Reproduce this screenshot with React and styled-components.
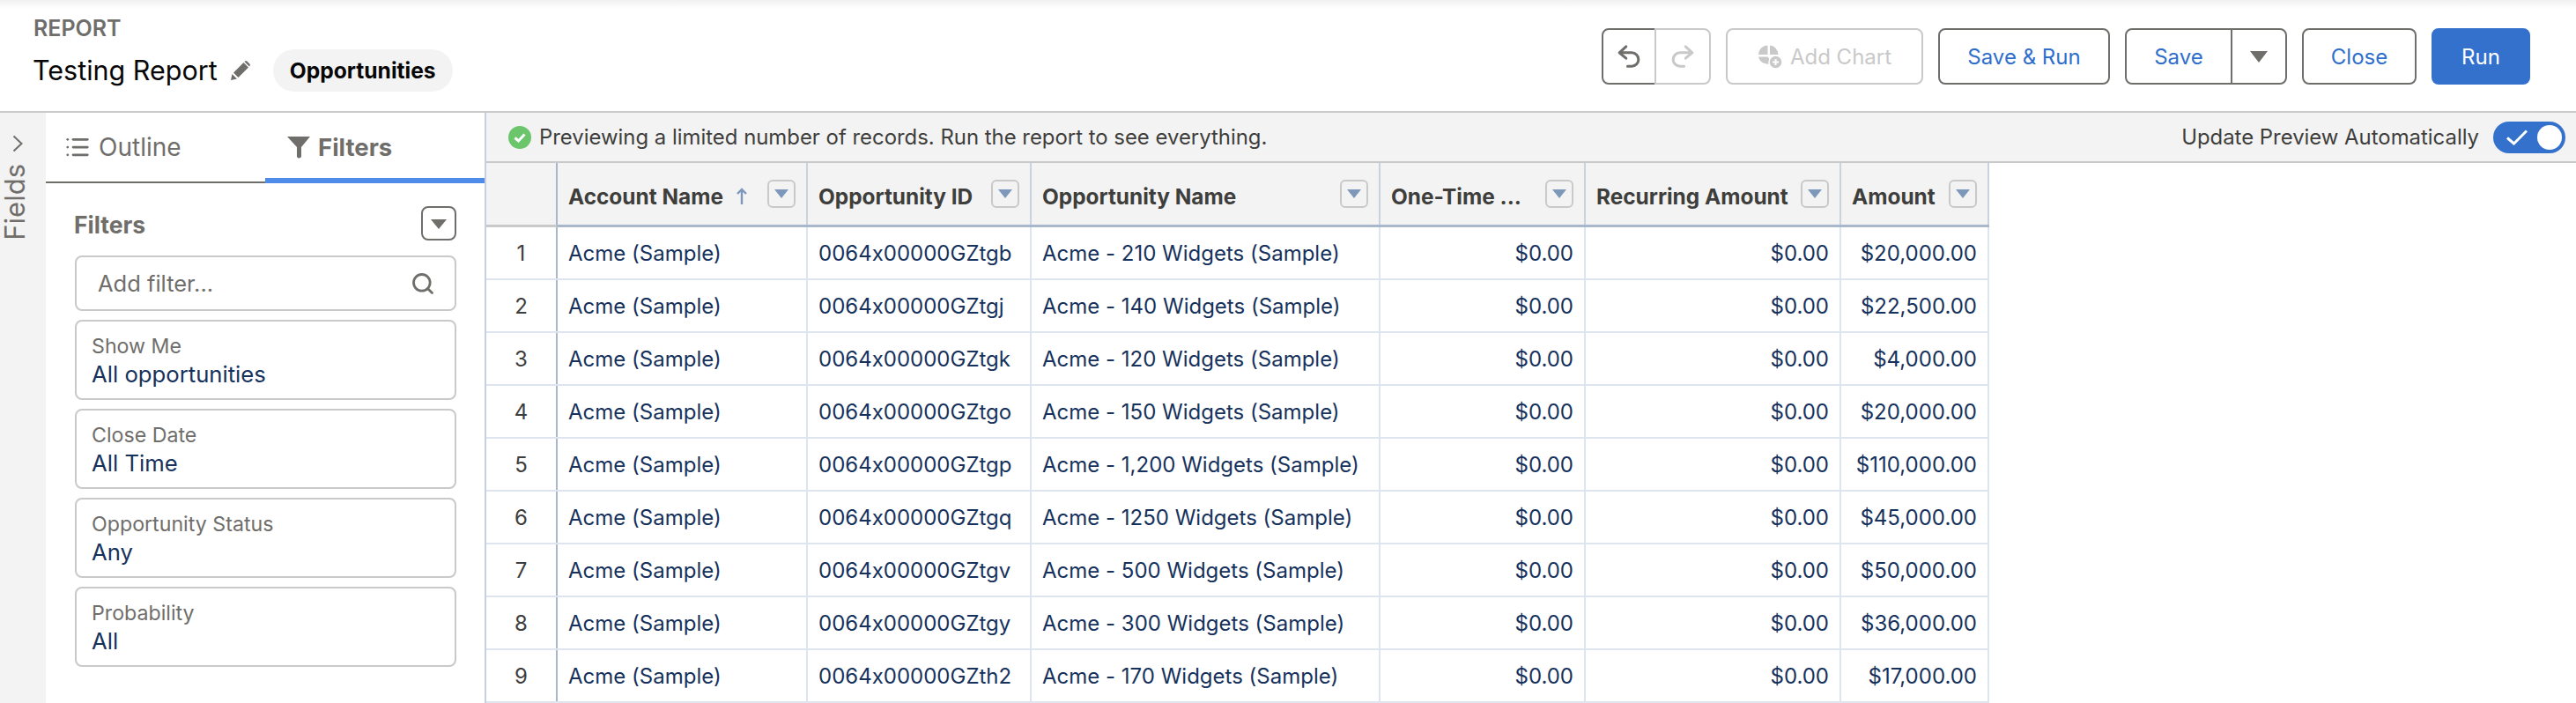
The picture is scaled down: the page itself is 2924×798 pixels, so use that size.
import React from 'react';
import styled, { createGlobalStyle } from 'styled-components';
import { List, Search } from 'lucide-react';

const GlobalStyle = createGlobalStyle`
  * { box-sizing: border-box; }
  html, body { margin: 0; padding: 0; background: #fff; }
  body {
    font-family: Inter, "Liberation Sans", sans-serif;
    font-feature-settings: "calt" 0;
    overflow: hidden;
  }
`;

const Page = styled.div`
  width: 2924px;
  height: 798px;
  display: flex;
  flex-direction: column;
  overflow: hidden;
`;

const Header = styled.header`
  height: 128px;
  flex: none;
  display: flex;
  align-items: flex-start;
  justify-content: space-between;
  padding: 20px 52px 0 37px;
  background: linear-gradient(#f1f1f1, #fff 10px);
  border-bottom: 2px solid #c9c9c9;
`;

const TitleBlock = styled.div`
  display: flex;
  flex-direction: column;
  gap: 12px;
`;

const Eyebrow = styled.div`
  font-size: 25px;
  line-height: 24px;
  font-weight: 600;
  color: #706e6b;
  padding-left: 1px;
`;

const TitleRow = styled.div`
  display: flex;
  align-items: center;
`;

const Title = styled.h1`
  margin: 0;
  font-size: 30.5px;
  line-height: 48px;
  font-weight: 400;
  color: #080707;
`;

const PencilIcon = styled.svg`
  width: 24px;
  height: 24px;
  margin: 0 25px 0 14px;
  fill: #706e6b;
`;

const Pill = styled.span`
  height: 48px;
  display: flex;
  align-items: center;
  padding: 0 19px;
  border-radius: 24px;
  background: #f3f3f3;
  font-size: 24.6px;
  font-weight: 700;
  color: #080707;
`;

const Actions = styled.div`
  display: flex;
  gap: 17px;
  margin-top: 12px;
`;

const Button = styled.button`
  width: ${p => p.$width}px;
  height: 64px;
  padding: 0;
  display: flex;
  align-items: center;
  justify-content: center;
  gap: 9px;
  font: inherit;
  font-size: 24px;
  border-radius: 8px;
  border: 2px solid ${p => (p.$disabled ? '#c9c9c9' : p.$primary ? '#3371cc' : '#706e6b')};
  background: ${p => (p.$primary ? '#3371cc' : '#fff')};
  color: ${p => (p.$disabled ? '#c9c9c9' : p.$primary ? '#fff' : '#2f6ecb')};
`;

const SplitLeft = styled(Button)`
  border-radius: 8px 0 0 8px;
`;

const SplitRight = styled(Button)`
  margin-left: -2px;
  border-radius: 0 8px 8px 0;
`;

const Group = styled.div`
  display: flex;
`;

const ActionIcon = styled.svg`
  width: 28px;
  height: 28px;
  fill: none;
  stroke: ${p => p.$color};
  stroke-width: 2.6;
  stroke-linecap: round;
  stroke-linejoin: round;
  transform: ${p => (p.$flip ? 'scaleX(-1)' : 'none')};
`;

const Caret = styled.span`
  width: 0;
  height: 0;
  border-left: ${p => p.$size}px solid transparent;
  border-right: ${p => p.$size}px solid transparent;
  border-top: ${p => p.$size * 1.3}px solid ${p => p.$color};
  margin-top: ${p => p.$offset || 0}px;
`;

const Body = styled.div`
  flex: 1;
  min-height: 0;
  display: flex;
`;

const Rail = styled.aside`
  width: 52px;
  flex: none;
  background: #f3f3f3;
  display: flex;
  flex-direction: column;
  align-items: flex-start;
  padding-top: 25px;
  gap: 13px;
  color: #706e6b;
`;

const RailChevron = styled.svg`
  width: 12px;
  height: 20px;
  margin-left: 14px;
  fill: none;
  stroke: #706e6b;
  stroke-width: 2;
`;

const RailLabel = styled.span`
  writing-mode: vertical-rl;
  transform: rotate(180deg);
  font-size: 31px;
  line-height: 33px;
  color: #706e6b;
`;

const Panel = styled.section`
  width: 500px;
  flex: none;
  border-right: 2px solid #c4d0e0;
`;

const Tabs = styled.div`
  height: 80px;
  display: grid;
  grid-template-columns: 249px 249px;
`;

const Tab = styled.div`
  display: flex;
  align-items: center;
  gap: 9px;
  padding: ${p => (p.$active ? '3px 0 0 25px' : '0 0 0 21px')};
  font-size: ${p => (p.$active ? 27.5 : 28)}px;
  font-weight: ${p => (p.$active ? 700 : 400)};
  color: #706e6b;
  border-bottom: ${p => (p.$active ? '6px solid #4f8cea' : '2px solid #706e6b')};
`;

const FunnelIcon = styled.svg`
  width: 26px;
  height: 26px;
  fill: #706e6b;
`;

const FilterArea = styled.div`
  padding: 26px 32px 0 33px;
  display: flex;
  flex-direction: column;
  gap: 10px;
`;

const FilterHead = styled.div`
  display: flex;
  align-items: center;
  justify-content: space-between;
  margin-bottom: 7px;
`;

const FilterTitle = styled.h2`
  margin: 3px 0 0 -1px;
  font-size: 26.5px;
  font-weight: 700;
  color: #706e6b;
`;

const MenuButton = styled.button`
  width: 40px;
  height: 39px;
  padding: 0;
  display: flex;
  align-items: center;
  justify-content: center;
  background: #fff;
  border: 2px solid #706e6b;
  border-radius: 8px;
`;

const AddFilter = styled.div`
  height: 63px;
  display: flex;
  align-items: center;
  justify-content: space-between;
  padding: 0 22px 0 24px;
  border: 2px solid #c9c9c9;
  border-radius: 8px;
  font-size: 25.5px;
  color: #706e6b;
`;

const FilterCard = styled.div`
  height: 91px;
  padding: 12px 17px 0;
  border: 2px solid #c9c9c9;
  border-radius: 8px;
`;

const CardLabel = styled.div`
  font-size: 23.2px;
  line-height: 32px;
  color: #706e6b;
`;

const CardValue = styled.div`
  font-size: 25.7px;
  line-height: 32px;
  color: #16325c;
`;

const Main = styled.main`
  flex: 1;
  min-width: 0;
`;

const Notice = styled.div`
  height: 57px;
  display: flex;
  align-items: center;
  justify-content: space-between;
  padding: 0 12px 0 25px;
  background: #f3f3f3;
  border-bottom: 2px solid #c9c9c9;
  font-size: 23.9px;
  color: #3e3e3c;
`;

const NoticeText = styled.div`
  display: flex;
  align-items: center;
  gap: 9px;
`;

const NoticeToggle = styled.div`
  display: flex;
  align-items: center;
  gap: 16px;
`;

const Switch = styled.div`
  width: 82px;
  height: 36px;
  display: flex;
  align-items: center;
  justify-content: space-between;
  padding: 0 4px 0 15px;
  border-radius: 18px;
  background: #3371cc;
`;

const Knob = styled.span`
  width: 28px;
  height: 28px;
  border-radius: 50%;
  background: #fff;
`;

const Table = styled.div`
  width: 1706px;
`;

const columns = '81px 284px 254px 396px 233px 290px 168px';

const HeadRow = styled.div`
  display: grid;
  grid-template-columns: ${columns};
  height: 73px;
  background: #f3f3f3;
  border-bottom: 3px solid #a8b7c9;
`;

const HeadCell = styled.div`
  display: flex;
  align-items: center;
  padding: 0 12px;
  border-right: 2px solid #c9d3e0;
  font-size: 24.4px;
  font-weight: 700;
  color: #3e3e3c;
  white-space: nowrap;
`;

const CornerCell = styled.div`
  border-right: 2px solid #a8b7c9;
  border-bottom: 3px solid #c9c9c9;
  margin-bottom: -3px;
`;

const HeadLabel = styled.span`
  flex: 1;
  display: flex;
  align-items: center;
  gap: 14px;
  padding-top: 5px;
`;

const SortArrow = styled.svg`
  width: 14px;
  height: 20px;
  fill: none;
  stroke: #7d98ba;
  stroke-width: 2.4;
`;

const ColumnMenu = styled.span`
  width: 32px;
  height: 32px;
  display: flex;
  align-items: center;
  justify-content: center;
  border: 2px solid #c9c9c9;
  border-radius: 6px;
`;

const Row = styled.div`
  display: grid;
  grid-template-columns: ${columns};
  height: 60px;
  border-bottom: 2px solid #dfe5ef;
`;

const NumberCell = styled.div`
  display: flex;
  align-items: center;
  justify-content: center;
  border-right: 2px solid #a8b7c9;
  font-size: 24px;
  color: #3e3e3c;
`;

const Cell = styled.div`
  display: flex;
  align-items: center;
  justify-content: ${p => (p.$right ? 'flex-end' : 'flex-start')};
  padding: 0 12px;
  border-right: 2px solid #dfe5ef;
  font-size: 24px;
  color: #16325c;
  white-space: nowrap;
`;

const headers = [
  { label: 'Account Name', sorted: true },
  { label: 'Opportunity ID' },
  { label: 'Opportunity Name' },
  { label: 'One-Time ...' },
  { label: 'Recurring Amount' },
  { label: 'Amount' },
];

const rows = [
  ['0064x00000GZtgb', 'Acme - 210 Widgets (Sample)', '$20,000.00'],
  ['0064x00000GZtgj', 'Acme - 140 Widgets (Sample)', '$22,500.00'],
  ['0064x00000GZtgk', 'Acme - 120 Widgets (Sample)', '$4,000.00'],
  ['0064x00000GZtgo', 'Acme - 150 Widgets (Sample)', '$20,000.00'],
  ['0064x00000GZtgp', 'Acme - 1,200 Widgets (Sample)', '$110,000.00'],
  ['0064x00000GZtgq', 'Acme - 1250 Widgets (Sample)', '$45,000.00'],
  ['0064x00000GZtgv', 'Acme - 500 Widgets (Sample)', '$50,000.00'],
  ['0064x00000GZtgy', 'Acme - 300 Widgets (Sample)', '$36,000.00'],
  ['0064x00000GZth2', 'Acme - 170 Widgets (Sample)', '$17,000.00'],
];

const filters = [
  { label: 'Show Me', value: 'All opportunities' },
  { label: 'Close Date', value: 'All Time' },
  { label: 'Opportunity Status', value: 'Any' },
  { label: 'Probability', value: 'All' },
];

const UndoIcon = ({ color, flip }) => (
  <ActionIcon $color={color} $flip={flip} viewBox="0.8 0.6 24 24">
    <path d="M10 3 L3.5 9 L10 14.5 M4 9 H15.5 a6.6 6.6 0 0 1 0 13.2 H11.5" />
  </ActionIcon>
);

const App = () => (
  <Page>
    <GlobalStyle />
    <Header>
      <TitleBlock>
        <Eyebrow>REPORT</Eyebrow>
        <TitleRow>
          <Title>Testing Report</Title>
          <PencilIcon viewBox="0 0 24 24">
            <path d="M1 23 L2.5 16 L8 21.5 Z M4 14.5 L15.5 3 L21 8.5 L9.5 20 Z M17 1.6 Q18.2 .6 19.4 1.6 L22.4 4.6 Q23.4 5.8 22.4 7 L22 7.5 L16.5 2 Z" />
          </PencilIcon>
          <Pill>Opportunities</Pill>
        </TitleRow>
      </TitleBlock>
      <Actions>
        <Group>
          <SplitLeft $width={62} aria-label="Undo"><UndoIcon color="#706e6b" /></SplitLeft>
          <SplitRight $width={64} $disabled aria-label="Redo"><UndoIcon color="#c9c9c9" flip /></SplitRight>
        </Group>
        <Button $width={224} $disabled>
          <svg width="28" height="28" viewBox="0 0 28 28" fill="#c9c9c9">
            <path d="M11.5 1.5 V12 H1 A10.6 10.6 0 0 1 11.5 1.5 Z" />
            <path d="M14 1.5 A10.6 10.6 0 0 1 23.6 12 H14 Z" />
            <path d="M1 14.5 H11.5 L17 21 A10.6 10.6 0 0 1 1 14.5 Z" />
            <circle cx="20.5" cy="20.5" r="7.5" stroke="#fff" strokeWidth="1.5" />
            <path d="M20.5 17 V24 M17 20.5 H24" stroke="#fff" strokeWidth="2" />
          </svg>
          Add Chart
        </Button>
        <Button $width={195}>Save &amp; Run</Button>
        <Group>
          <SplitLeft $width={122}>Save</SplitLeft>
          <SplitRight $width={64}><Caret $size={10} $color="#706e6b" /></SplitRight>
        </Group>
        <Button $width={130}>Close</Button>
        <Button $width={112} $primary>Run</Button>
      </Actions>
    </Header>
    <Body>
      <Rail>
        <RailChevron viewBox="0 0 12 20">
          <path d="M1.5 1.5 L10.5 10 L1.5 18.5" />
        </RailChevron>
        <RailLabel>Fields</RailLabel>
      </Rail>
      <Panel>
        <Tabs>
          <Tab>
            <List size={30} strokeWidth={2.2} />
            Outline
          </Tab>
          <Tab $active>
            <FunnelIcon viewBox="0 0 26 26">
              <path d="M0 1 H26 L16 13 V24 Q13 27 11 24 V13 Z" />
            </FunnelIcon>
            Filters
          </Tab>
        </Tabs>
        <FilterArea>
          <FilterHead>
            <FilterTitle>Filters</FilterTitle>
            <MenuButton aria-label="Filter actions"><Caret $size={9} $color="#706e6b" $offset={2} /></MenuButton>
          </FilterHead>
          <AddFilter>
            Add filter...
            <Search size={28} strokeWidth={2.4} color="#706e6b" />
          </AddFilter>
          {filters.map(f => (
            <FilterCard key={f.label}>
              <CardLabel>{f.label}</CardLabel>
              <CardValue>{f.value}</CardValue>
            </FilterCard>
          ))}
        </FilterArea>
      </Panel>
      <Main>
        <Notice>
          <NoticeText>
            <svg width="26" height="26" viewBox="0 0 26 26">
              <circle cx="13" cy="13" r="13" fill="#6bc56b" />
              <path d="M7.5 13.5 L11.5 17 L18.5 9.5" fill="none" stroke="#fff" strokeWidth="3" />
            </svg>
            Previewing a limited number of records. Run the report to see everything.
          </NoticeText>
          <NoticeToggle>
            Update Preview Automatically
            <Switch>
              <svg width="24" height="18" viewBox="0 0 24 18" fill="none" stroke="#fff" strokeWidth="3">
                <path d="M1 9.5 L8.5 16 L23 1.5" />
              </svg>
              <Knob />
            </Switch>
          </NoticeToggle>
        </Notice>
        <Table>
          <HeadRow>
            <CornerCell />
            {headers.map(h => (
              <HeadCell key={h.label}>
                <HeadLabel>
                  {h.label}
                  {h.sorted && (
                    <SortArrow viewBox="0 0 14 20">
                      <path d="M7 19 V2 M2 7 L7 2 L12 7" />
                    </SortArrow>
                  )}
                </HeadLabel>
                <ColumnMenu><Caret $size={8} $color="#7d98ba" /></ColumnMenu>
              </HeadCell>
            ))}
          </HeadRow>
          {rows.map((r, i) => (
            <Row key={r[0]}>
              <NumberCell>{i + 1}</NumberCell>
              <Cell>Acme (Sample)</Cell>
              <Cell>{r[0]}</Cell>
              <Cell>{r[1]}</Cell>
              <Cell $right>$0.00</Cell>
              <Cell $right>$0.00</Cell>
              <Cell $right>{r[2]}</Cell>
            </Row>
          ))}
        </Table>
      </Main>
    </Body>
  </Page>
);

export default App;
